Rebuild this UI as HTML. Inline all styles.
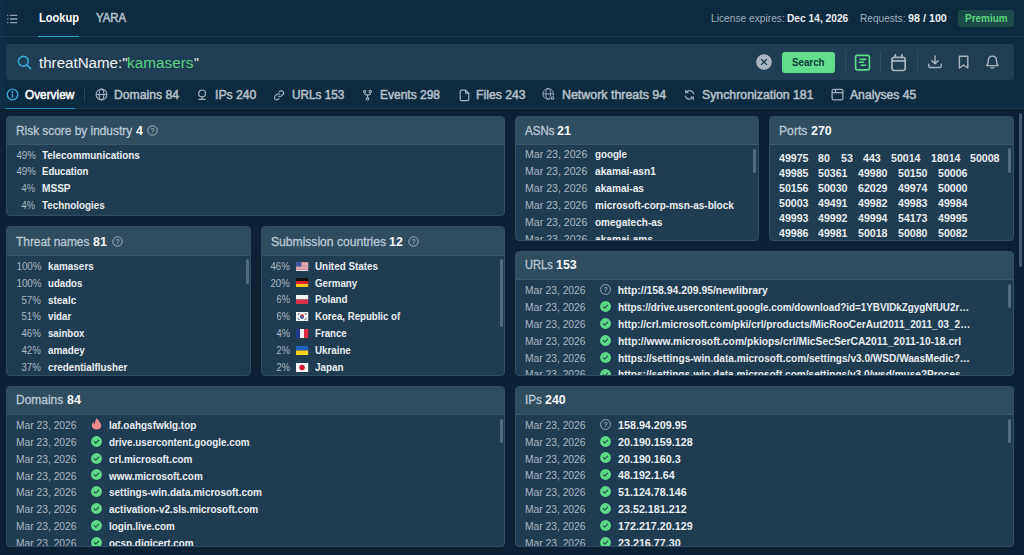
<!DOCTYPE html>
<html lang="en">
<head>
<meta charset="utf-8">
<title>Lookup</title>
<style>
*{box-sizing:border-box;margin:0;padding:0}
html,body{width:1024px;height:555px;overflow:hidden}
body{background:#0a2233;font-family:"Liberation Sans",sans-serif;color:#fff;position:relative;font-size:10.4px}
.abs{position:absolute}
.f{transform-origin:0 50%;display:inline-block;white-space:pre}
#top{left:0;top:0;width:1024px;height:109px;background:#0c2a40}
#topgrad{left:0;top:0;width:14px;height:109px;background:linear-gradient(90deg,#0e3048,rgba(12,42,64,0))}
#topline{left:0;top:36px;width:1024px;height:1px;background:#1a3b52}
#tabline{left:0;top:108px;width:1024px;height:1px;background:#16364c}
.t{position:absolute;white-space:nowrap;line-height:1}
#search{left:6px;top:44px;width:1008px;height:36px;background:#203e53;border-radius:4px}
.panel{position:absolute;background:#1f3d52;border:1px solid #2f4e63;border-radius:4px;overflow:hidden}
.ph{position:absolute;left:0;top:0;right:0;height:28.4px;background:#2e4d61;border-bottom:1px solid #3a596d}
.pt{position:absolute;left:9.4px;top:6px;font-size:12px;color:#b9c9d6;white-space:nowrap;line-height:14px}
.pt>.f{-webkit-text-stroke:0.3px #b9c9d6}
.pt b{color:#f6f8fa;font-weight:bold}
.rows{position:absolute;left:0;right:0;top:30.6px}
.r{position:relative;height:16.85px;line-height:16.85px;white-space:nowrap}
.r>span{position:absolute;top:0}
.pc{left:0;width:33.5px;text-align:right;color:#a9b8c4;transform-origin:100% 50%}
.pc .f{transform-origin:100% 50%}
.nm{font-weight:bold;color:#e9eef2}
.dt{left:9.4px;color:#a9b8c4}
.tb{top:88.5px;font-size:12px;font-weight:500;color:#b4c0ca;-webkit-text-stroke:0.5px}
.hp{position:absolute;top:1.1px;margin-left:4.8px}
.risk .pc{width:28.3px}
.risk .nm{left:35.3px}
.thr .pc{width:34.1px}
.thr .nm{left:41px}
.pc2{width:28px}
.fl{position:absolute;left:34.8px;top:2.8px}
.cn{left:53.8px}
.ic{position:absolute;top:0.8px}
#p_dom .ic{left:83.9px}
#p_url .ic,#p_ip .ic{left:83.5px}
#p_url .ic{top:1.3px}
.n0{left:78.9px}
.n1{left:101.5px}
.n3{left:101.5px}
.ports{position:absolute;left:8.6px;top:33.5px;line-height:15.15px;font-weight:bold;white-space:nowrap;color:#e9eef2}
.ports i{display:inline-block;width:10.3px}
.sb{position:absolute;width:3px;border-radius:2px;background:#4f6b80}
#p_asn .dt,#p_url .dt,#p_ip .dt{left:9.3px}
.ic.fi{top:-0.1px !important}
</style>
</head>
<body>
<div id="top" class="abs"></div>
<div id="topgrad" class="abs"></div>
<div id="topline" class="abs"></div>
<div id="tabline" class="abs"></div>
<div id="search" class="abs"></div>
<!-- top bar -->
<svg class="abs" style="left:6px;top:13px" width="13" height="12" viewBox="0 0 13 12" fill="none" stroke="#8fa0ae" stroke-width="1.3"><path d="M4 2.3H11.2M4 6H11.2M4 9.7H11.2"/><path d="M1.2 2.3H2.4M1.2 6H2.4M1.2 9.7H2.4"/></svg>
<div class="t" style="left:38.5px;top:12px;font-size:12px;font-weight:bold;color:#fff"><span class="f" style="transform:scaleX(0.921);margin-right:-3.4px;">Lookup</span></div>
<div class="abs" style="left:38px;top:35.5px;width:41px;height:1.6px;background:#35a7d6"></div>
<div class="t" style="left:95.5px;top:12px;font-size:12px;font-weight:500;-webkit-text-stroke:0.5px;color:#b3c1cd"><span class="f" style="transform:scaleX(0.948);margin-right:-1.7px;">YARA</span></div>
<div class="t" style="left:710.5px;top:13.6px;font-size:10.4px;color:#9fb0bd"><span class="f" style="transform:scaleX(0.983);margin-right:-1.3px;">License expires: </span><b style="color:#e9eff3"><span class="f" style="transform:scaleX(0.982);margin-right:-1.1px;">Dec 14, 2026</span></b></div>
<div class="t" style="left:859.5px;top:13.6px;font-size:10.4px;color:#9fb0bd"><span class="f" style="transform:scaleX(0.972);margin-right:-1.4px;">Requests: </span><b style="color:#e9eff3"><span class="f" style="transform:scaleX(1.034);margin-right:1.3px;">98 / 100</span></b></div>
<div class="abs" style="left:958px;top:10px;width:56px;height:17px;border-radius:3px;background:#1b4a48"></div>
<div class="t" style="left:965px;top:13.6px;font-size:10.4px;font-weight:bold;color:#5bd682"><span class="f" style="transform:scaleX(0.958);margin-right:-1.9px;">Premium</span></div>
<!-- search bar -->
<svg class="abs" style="left:16px;top:54px" width="17" height="17" viewBox="0 0 17 17" fill="none" stroke="#3aa8d8" stroke-width="1.6" stroke-linecap="round"><circle cx="7.3" cy="7.3" r="4.9"/><path d="M11 11L14.6 14.6"/></svg>
<div class="t" style="left:38.5px;top:55px;font-size:15.2px;color:#eef3f6"><span class="f" style="transform:scaleX(0.996);margin-right:-0.3px;">threatName:&quot;</span><span class="f" style="transform:scaleX(1.009);margin-right:0.6px;color:#5ad17f">kamasers</span><span class="f" style="transform:scaleX(0.902);margin-right:-0.5px;">&quot;</span></div>
<svg class="abs" style="left:756px;top:54px" width="16" height="16" viewBox="0 0 16 16"><circle cx="8" cy="8" r="7.8" fill="#a9b6c1"/><path d="M5.1 5.1L10.9 10.9M10.9 5.1L5.1 10.9" stroke="#1b3446" stroke-width="1.3" fill="none"/></svg>
<div class="abs" style="left:781.5px;top:52px;width:53.5px;height:20.5px;border-radius:3px;background:#63dc8b"></div>
<div class="t" style="left:792px;top:58.2px;font-size:10.4px;font-weight:bold;color:#0d3a3c"><span class="f" style="transform:scaleX(0.938);margin-right:-2.2px;">Search</span></div>
<div class="abs" style="left:845px;top:51px;width:1px;height:22px;background:#2f4c60"></div>
<div class="abs" style="left:880px;top:51px;width:1px;height:22px;background:#2f4c60"></div>
<div class="abs" style="left:917px;top:51px;width:1px;height:22px;background:#2f4c60"></div>
<svg class="abs" style="left:854px;top:53.5px" width="17" height="18" viewBox="0 0 17 18" fill="none" stroke="#5edb87" stroke-width="1.6" stroke-linecap="round"><rect x="1.6" y="1.4" width="13.8" height="14.5" rx="1.8"/><path d="M6.4 5.4H11.5M5.4 8.3H9.6M7.3 11.3H11.5" stroke-width="1.6"/></svg>
<svg class="abs" style="left:890px;top:52.5px" width="18" height="19" viewBox="0 0 18 19" fill="none" stroke="#a9b6c1" stroke-width="1.7" stroke-linecap="round"><rect x="2" y="4.4" width="13.2" height="13.1" rx="2.2"/><path d="M2 7.8H15.2M5.3 1.8V4.4M12 1.8V4.4"/></svg>
<svg class="abs" style="left:927px;top:54px" width="16" height="16" viewBox="0 0 16 16" fill="none" stroke="#a9b6c1" stroke-width="1.4" stroke-linecap="round" stroke-linejoin="round"><path d="M8 2V9.6M4.9 6.8L8 9.8L11.1 6.8M1.8 10.2V12.2Q1.8 13.5 3.1 13.5H12.9Q14.2 13.5 14.2 12.2V10.2"/></svg>
<svg class="abs" style="left:956px;top:54px" width="16" height="16" viewBox="0 0 16 16" fill="none" stroke="#a9b6c1" stroke-width="1.4" stroke-linejoin="round"><path d="M3.4 2.2H11.8V14L7.6 11L3.4 14Z"/></svg>
<svg class="abs" style="left:984px;top:54px" width="17" height="16" viewBox="0 0 17 16" fill="none" stroke="#a9b6c1" stroke-width="1.4" stroke-linecap="round" stroke-linejoin="round"><path d="M2.6 11.6C4.2 10.4 4.3 8.8 4.3 6.6C4.3 3.9 6 2.1 8.4 2.1C10.8 2.1 12.5 3.9 12.5 6.6C12.5 8.8 12.6 10.4 14.2 11.6Z"/><path d="M7 13.9H9.8"/></svg>
<!-- tabs -->
<svg class="abs" style="left:5.5px;top:87.6px" width="13" height="13" viewBox="0 0 13 13" fill="none" stroke="#3aa8d8" stroke-width="1.3" stroke-linecap="round"><circle cx="6.5" cy="6.5" r="5.3"/><path d="M6.5 6.2V9.2"/><circle cx="6.5" cy="4" r="0.4" fill="#3aa8d8"/></svg>
<div class="t tb" style="left:25px;color:#fff"><span class="f" style="transform:scaleX(0.985);margin-right:-0.8px;">Overview</span></div>
<div class="abs" style="left:6px;top:107.8px;width:69.2px;height:1.4px;background:#2a8fc0"></div>
<div class="abs" style="left:84.2px;top:87px;width:1px;height:14px;background:#2a475c"></div>
<svg class="abs" style="left:95px;top:87.6px" width="13" height="13" viewBox="0 0 13 13" fill="none" stroke="#a3b2be" stroke-width="1.1"><circle cx="6.5" cy="6.5" r="5.4"/><ellipse cx="6.5" cy="6.5" rx="2.4" ry="5.4"/><path d="M1.1 6.5H11.9"/></svg>
<div class="t tb" style="left:114.3px"><span class="f" style="transform:scaleX(1.016);margin-right:1.0px;">Domains 84</span></div>
<svg class="abs" style="left:195px;top:87.6px" width="13" height="14" viewBox="0 0 13 14" fill="none" stroke="#a3b2be" stroke-width="1.2" stroke-linecap="round"><circle cx="7.1" cy="5.4" r="3.4"/><path d="M7.1 8.8V11.3M4 11.4H10.2"/></svg>
<div class="t tb" style="left:215px"><span class="f" style="transform:scaleX(1.015);margin-right:0.6px;">IPs 240</span></div>
<svg class="abs" style="left:272px;top:87.6px" width="13" height="13" viewBox="0 0 13 13" fill="none" stroke="#a3b2be" stroke-width="1.3" stroke-linecap="round"><g transform="translate(7 7.2) scale(.86) translate(-6.5 -6.5)"><path d="M5.6 7.4A2.6 2.6 0 0 0 9.3 7.4L11 5.7A2.6 2.6 0 0 0 7.3 2L6.6 2.7"/><path d="M7.4 5.6A2.6 2.6 0 0 0 3.7 5.6L2 7.3A2.6 2.6 0 0 0 5.7 11L6.4 10.3"/></g></svg>
<div class="t tb" style="left:292px"><span class="f" style="transform:scaleX(0.980);margin-right:-1.1px;">URLs 153</span></div>
<svg class="abs" style="left:360.8px;top:88.6px" width="13" height="13" viewBox="0 0 13 13" fill="none" stroke="#a3b2be" stroke-width="1.15"><circle cx="3.7" cy="2.4" r="1.15"/><circle cx="9.3" cy="2.4" r="1.15"/><circle cx="6.5" cy="9.8" r="1.15"/><path d="M3.7 3.6V4.3Q3.7 5.9 5.3 5.9H7.7Q9.3 5.9 9.3 4.3V3.6M6.5 5.9V8.6"/></svg>
<div class="t tb" style="left:380px"><span class="f" style="">Events 298</span></div>
<svg class="abs" style="left:457.5px;top:87.5px" width="13" height="14" viewBox="0 0 13 14" fill="none" stroke="#a3b2be" stroke-width="1.2" stroke-linejoin="round"><path d="M2.2 3.4Q2.2 2.2 3.4 2.2H7.6L10.8 5.2V11.4Q10.8 12.6 9.6 12.6H3.4Q2.2 12.6 2.2 11.4Z"/><path d="M7.6 2.2V5.2H10.8"/></svg>
<div class="t tb" style="left:476px"><span class="f" style="transform:scaleX(1.017);margin-right:0.8px;">Files 243</span></div>
<svg class="abs" style="left:542.2px;top:87.2px" width="14" height="14" viewBox="0 0 14 14" fill="none" stroke="#a3b3c0" stroke-width="0.9"><circle cx="6.2" cy="6.9" r="5.3"/><ellipse cx="6.2" cy="6.9" rx="2.3" ry="5.3"/><path d="M.9 6.9H11.5"/><circle cx="10.6" cy="11" r="2.5" fill="#0c2a40" stroke="none"/><circle cx="10.6" cy="11" r="1.3" stroke-width="1.1"/></svg>
<div class="t tb" style="left:561.5px"><span class="f" style="transform:scaleX(1.034);margin-right:3.4px;">Network threats 94</span></div>
<svg class="abs" style="left:682.5px;top:87.6px" width="13" height="13" viewBox="0 0 13 13" fill="none" stroke="#a3b2be" stroke-width="1.3" stroke-linecap="round" stroke-linejoin="round"><g transform="translate(6.5 6.9) scale(.88) translate(-6.5 -6.5)"><path d="M11.3 5.2A5 5 0 0 0 2.4 3.8M1.7 7.8A5 5 0 0 0 10.6 9.2"/><path d="M2.2 1.4V4H4.8M10.8 11.6V9H8.2"/></g></svg>
<div class="t tb" style="left:702px"><span class="f" style="transform:scaleX(1.026);margin-right:2.8px;">Synchronization 181</span></div>
<svg class="abs" style="left:830.5px;top:87.6px" width="13" height="13" viewBox="0 0 13 13" fill="none" stroke="#a3b2be" stroke-width="1.2"><rect x="1.1" y="1.3" width="10.8" height="10.6" rx="1.4"/><path d="M1.1 4.7H11.9M4.6 1.3V4.7"/></svg>
<div class="t tb" style="left:850px"><span class="f" style="transform:scaleX(1.015);margin-right:0.9px;">Analyses 45</span></div>
<!-- panels -->
<div class="panel" id="p_risk" style="left:6px;top:116px;width:499px;height:100.2px"><div class="ph"></div><div class="pt" style="left:9.4px;top:7px"><span class="f" style="transform:scaleX(0.989);margin-right:-1.3px;">Risk score by industry </span><b><span class="f" style="transform:scaleX(1.030);margin-right:0.2px;">4</span></b><svg class="hp" width="11" height="11" viewBox="0 0 11 11" fill="none" stroke="#a9bccb" stroke-width="0.9"><circle cx="5.5" cy="5.5" r="4.7"/><text x="5.5" y="8" text-anchor="middle" font-size="7" font-family="Liberation Sans, sans-serif" fill="#c3ced7" stroke="none">?</text></svg></div>
<div class="rows risk" style="top:30.6px">
<div class="r"><span class="pc"><span class="f" style="transform:scaleX(0.928);margin-left:-1.5px;">49%</span></span><span class="nm"><span class="f" style="transform:scaleX(0.954);margin-right:-4.7px;">Telecommunications</span></span></div>
<div class="r"><span class="pc"><span class="f" style="transform:scaleX(0.928);margin-left:-1.5px;">49%</span></span><span class="nm"><span class="f" style="transform:scaleX(0.923);margin-right:-3.9px;">Education</span></span></div>
<div class="r"><span class="pc"><span class="f" style="transform:scaleX(0.895);margin-left:-1.6px;">4%</span></span><span class="nm"><span class="f" style="transform:scaleX(0.971);margin-right:-0.9px;">MSSP</span></span></div>
<div class="r"><span class="pc"><span class="f" style="transform:scaleX(0.895);margin-left:-1.6px;">4%</span></span><span class="nm"><span class="f" style="transform:scaleX(0.948);margin-right:-3.4px;">Technologies</span></span></div>
</div></div>
<div class="panel" id="p_thr" style="left:6px;top:226.4px;width:244.8px;height:149.4px"><div class="ph"></div><div class="pt" style="left:9.4px;top:7.5px"><span class="f" style="transform:scaleX(0.992);margin-right:-0.6px;">Threat names </span><b><span class="f" style="transform:scaleX(1.032);margin-right:0.4px;">81</span></b><svg class="hp" width="11" height="11" viewBox="0 0 11 11" fill="none" stroke="#a9bccb" stroke-width="0.9"><circle cx="5.5" cy="5.5" r="4.7"/><text x="5.5" y="8" text-anchor="middle" font-size="7" font-family="Liberation Sans, sans-serif" fill="#c3ced7" stroke="none">?</text></svg></div>
<div class="rows thr" style="top:31.5px">
<div class="r"><span class="pc"><span class="f" style="transform:scaleX(0.946);margin-left:-1.4px;">100%</span></span><span class="nm"><span class="f" style="transform:scaleX(0.954);margin-right:-2.2px;">kamasers</span></span></div>
<div class="r"><span class="pc"><span class="f" style="transform:scaleX(0.946);margin-left:-1.4px;">100%</span></span><span class="nm"><span class="f" style="transform:scaleX(0.928);margin-right:-2.7px;">udados</span></span></div>
<div class="r"><span class="pc"><span class="f" style="transform:scaleX(0.928);margin-left:-1.5px;">57%</span></span><span class="nm"><span class="f" style="transform:scaleX(0.957);margin-right:-1.3px;">stealc</span></span></div>
<div class="r"><span class="pc"><span class="f" style="transform:scaleX(0.928);margin-left:-1.5px;">51%</span></span><span class="nm"><span class="f" style="transform:scaleX(0.935);margin-right:-1.6px;">vidar</span></span></div>
<div class="r"><span class="pc"><span class="f" style="transform:scaleX(0.928);margin-left:-1.5px;">46%</span></span><span class="nm"><span class="f" style="transform:scaleX(0.926);margin-right:-2.9px;">sainbox</span></span></div>
<div class="r"><span class="pc"><span class="f" style="transform:scaleX(0.928);margin-left:-1.5px;">42%</span></span><span class="nm"><span class="f" style="transform:scaleX(0.950);margin-right:-2.0px;">amadey</span></span></div>
<div class="r"><span class="pc"><span class="f" style="transform:scaleX(0.928);margin-left:-1.5px;">37%</span></span><span class="nm"><span class="f" style="transform:scaleX(0.948);margin-right:-4.4px;">credentialflusher</span></span></div>
<div class="r"><span class="pc"><span class="f" style="transform:scaleX(0.928);margin-left:-1.5px;">33%</span></span><span class="nm"><span class="f" style="transform:scaleX(0.961);margin-right:-1.3px;">stealer</span></span></div>
</div><div class="sb" style="right:1.2px;top:32px;height:24.5px"></div></div>
<div class="panel" id="p_sub" style="left:260.6px;top:226.4px;width:244.4px;height:149.4px"><div class="ph"></div><div class="pt" style="left:9.4px;top:7.5px"><span class="f" style="transform:scaleX(1.009);margin-right:1.1px;">Submission countries </span><b><span class="f" style="transform:scaleX(1.032);margin-right:0.4px;">12</span></b><svg class="hp" width="11" height="11" viewBox="0 0 11 11" fill="none" stroke="#a9bccb" stroke-width="0.9"><circle cx="5.5" cy="5.5" r="4.7"/><text x="5.5" y="8" text-anchor="middle" font-size="7" font-family="Liberation Sans, sans-serif" fill="#c3ced7" stroke="none">?</text></svg></div>
<div class="rows" style="top:31.4px">
<div class="r"><span class="pc pc2"><span class="f" style="transform:scaleX(0.928);margin-left:-1.5px;">46%</span></span><svg class="fl" width="12.2" height="9" viewBox="0 0 12 9" preserveAspectRatio="none"><rect width="12" height="9" fill="#e8e8ee"/><path d="M0 .6H12M0 2H12M0 3.4H12M0 4.8H12M0 6.2H12M0 7.6H12" stroke="#d4606f" stroke-width=".75"/><rect width="5.4" height="4.6" fill="#4a5a9c"/></svg><span class="nm cn"><span class="f" style="transform:scaleX(0.948);margin-right:-3.5px;">United States</span></span></div>
<div class="r"><span class="pc pc2"><span class="f" style="transform:scaleX(0.928);margin-left:-1.5px;">20%</span></span><svg class="fl" width="12.2" height="9" viewBox="0 0 12 9" preserveAspectRatio="none"><rect width="12" height="3" fill="#111"/><rect y="3" width="12" height="3" fill="#e01f26"/><rect y="6" width="12" height="3" fill="#f6c915"/></svg><span class="nm cn"><span class="f" style="transform:scaleX(0.935);margin-right:-2.9px;">Germany</span></span></div>
<div class="r"><span class="pc pc2"><span class="f" style="transform:scaleX(0.895);margin-left:-1.6px;">6%</span></span><svg class="fl" width="12.2" height="9" viewBox="0 0 12 9" preserveAspectRatio="none"><rect width="12" height="4.5" fill="#f4f4f4"/><rect y="4.5" width="12" height="4.5" fill="#d8304a"/></svg><span class="nm cn"><span class="f" style="transform:scaleX(0.938);margin-right:-2.2px;">Poland</span></span></div>
<div class="r"><span class="pc pc2"><span class="f" style="transform:scaleX(0.895);margin-left:-1.6px;">6%</span></span><svg class="fl" width="12.2" height="9" viewBox="0 0 12 9" preserveAspectRatio="none"><rect width="12" height="9" fill="#f7f7f7"/><path d="M3.9 4.5A2.1 2.1 0 0 1 8.1 4.5Z" fill="#cf3046" transform="rotate(25 6 4.5)"/><path d="M3.9 4.5A2.1 2.1 0 0 0 8.1 4.5Z" fill="#2c4a97" transform="rotate(25 6 4.5)"/><path d="M1.6 2.6L2.9 .9M2.3 3L3.6 1.3M8.4 7.7L9.7 6M9.1 8.1L10.4 6.4M8.4 1.3L9.7 3M9.1 .9L10.4 2.6M1.6 6.4L2.9 8.1M2.3 6L3.6 7.7" stroke="#222" stroke-width=".5"/></svg><span class="nm cn"><span class="f" style="transform:scaleX(0.928);margin-right:-6.6px;">Korea, Republic of</span></span></div>
<div class="r"><span class="pc pc2"><span class="f" style="transform:scaleX(0.895);margin-left:-1.6px;">4%</span></span><svg class="fl" width="12.2" height="9" viewBox="0 0 12 9" preserveAspectRatio="none"><rect width="4" height="9" fill="#1f3a93"/><rect x="4" width="4" height="9" fill="#f4f4f4"/><rect x="8" width="4" height="9" fill="#e6283c"/></svg><span class="nm cn"><span class="f" style="transform:scaleX(0.928);margin-right:-2.5px;">France</span></span></div>
<div class="r"><span class="pc pc2"><span class="f" style="transform:scaleX(0.895);margin-left:-1.6px;">2%</span></span><svg class="fl" width="12.2" height="9" viewBox="0 0 12 9" preserveAspectRatio="none"><rect width="12" height="4.5" fill="#1f63c4"/><rect y="4.5" width="12" height="4.5" fill="#f6d21c"/></svg><span class="nm cn"><span class="f" style="transform:scaleX(0.939);margin-right:-2.3px;">Ukraine</span></span></div>
<div class="r"><span class="pc pc2"><span class="f" style="transform:scaleX(0.895);margin-left:-1.6px;">2%</span></span><svg class="fl" width="12.2" height="9" viewBox="0 0 12 9" preserveAspectRatio="none"><rect width="12" height="9" fill="#f7f7f7"/><circle cx="6" cy="4.5" r="2.7" fill="#d7102f"/></svg><span class="nm cn"><span class="f" style="transform:scaleX(0.953);margin-right:-1.4px;">Japan</span></span></div>
</div><div class="sb" style="right:1.2px;top:32px;height:67.5px"></div></div>
<div class="panel" id="p_dom" style="left:6px;top:385.7px;width:499px;height:161.2px"><div class="ph"></div><div class="pt" style="left:9.4px;top:6.8px"><span class="f" style="transform:scaleX(0.996);margin-right:-0.2px;">Domains </span><b><span class="f" style="transform:scaleX(1.032);margin-right:0.4px;">84</span></b></div>
<div class="rows" style="top:31.4px">
<div class="r"><span class="dt"><span class="f" style="transform:scaleX(0.988);margin-right:-0.8px;">Mar 23, 2026</span></span><svg class="ic fi" width="11" height="12" viewBox="0 0 11 12"><path d="M6.1 0.1C6.6 1.8 8.2 3.2 9.3 4.9C10 6 10.3 7 10.2 8C10 10 8.2 11.5 5.6 11.5C3 11.5 1 10 0.9 7.8C0.8 6.3 1.4 5 2.3 4.1C2.6 5 3.1 5.7 3.9 6C3.7 3.8 4.6 1.6 6.1 0.1Z" fill="#f08a8c"/></svg><span class="nm n1"><span class="f" style="transform:scaleX(0.957);margin-right:-4.0px;">laf.oahgsfwklg.top</span></span></div>
<div class="r"><span class="dt"><span class="f" style="transform:scaleX(0.988);margin-right:-0.8px;">Mar 23, 2026</span></span><svg class="ic" width="11" height="11" viewBox="0 0 11 11"><circle cx="5.5" cy="5.5" r="5.45" fill="#5fd988"/><path d="M3.3 5.7L4.8 7.1L7.7 4.1" fill="none" stroke="#1f4a48" stroke-width="1.1" stroke-linecap="round" stroke-linejoin="round"/></svg><span class="nm n1"><span class="f" style="transform:scaleX(0.947);margin-right:-7.8px;">drive.usercontent.google.com</span></span></div>
<div class="r"><span class="dt"><span class="f" style="transform:scaleX(0.988);margin-right:-0.8px;">Mar 23, 2026</span></span><svg class="ic" width="11" height="11" viewBox="0 0 11 11"><circle cx="5.5" cy="5.5" r="5.45" fill="#5fd988"/><path d="M3.3 5.7L4.8 7.1L7.7 4.1" fill="none" stroke="#1f4a48" stroke-width="1.1" stroke-linecap="round" stroke-linejoin="round"/></svg><span class="nm n1"><span class="f" style="transform:scaleX(0.956);margin-right:-3.8px;">crl.microsoft.com</span></span></div>
<div class="r"><span class="dt"><span class="f" style="transform:scaleX(0.988);margin-right:-0.8px;">Mar 23, 2026</span></span><svg class="ic" width="11" height="11" viewBox="0 0 11 11"><circle cx="5.5" cy="5.5" r="5.45" fill="#5fd988"/><path d="M3.3 5.7L4.8 7.1L7.7 4.1" fill="none" stroke="#1f4a48" stroke-width="1.1" stroke-linecap="round" stroke-linejoin="round"/></svg><span class="nm n1"><span class="f" style="transform:scaleX(0.953);margin-right:-4.7px;">www.microsoft.com</span></span></div>
<div class="r"><span class="dt"><span class="f" style="transform:scaleX(0.988);margin-right:-0.8px;">Mar 23, 2026</span></span><svg class="ic" width="11" height="11" viewBox="0 0 11 11"><circle cx="5.5" cy="5.5" r="5.45" fill="#5fd988"/><path d="M3.3 5.7L4.8 7.1L7.7 4.1" fill="none" stroke="#1f4a48" stroke-width="1.1" stroke-linecap="round" stroke-linejoin="round"/></svg><span class="nm n1"><span class="f" style="transform:scaleX(0.960);margin-right:-6.3px;">settings-win.data.microsoft.com</span></span></div>
<div class="r"><span class="dt"><span class="f" style="transform:scaleX(0.988);margin-right:-0.8px;">Mar 23, 2026</span></span><svg class="ic" width="11" height="11" viewBox="0 0 11 11"><circle cx="5.5" cy="5.5" r="5.45" fill="#5fd988"/><path d="M3.3 5.7L4.8 7.1L7.7 4.1" fill="none" stroke="#1f4a48" stroke-width="1.1" stroke-linecap="round" stroke-linejoin="round"/></svg><span class="nm n1"><span class="f" style="transform:scaleX(0.960);margin-right:-6.2px;">activation-v2.sls.microsoft.com</span></span></div>
<div class="r"><span class="dt"><span class="f" style="transform:scaleX(0.988);margin-right:-0.8px;">Mar 23, 2026</span></span><svg class="ic" width="11" height="11" viewBox="0 0 11 11"><circle cx="5.5" cy="5.5" r="5.45" fill="#5fd988"/><path d="M3.3 5.7L4.8 7.1L7.7 4.1" fill="none" stroke="#1f4a48" stroke-width="1.1" stroke-linecap="round" stroke-linejoin="round"/></svg><span class="nm n1"><span class="f" style="transform:scaleX(0.949);margin-right:-3.5px;">login.live.com</span></span></div>
<div class="r"><span class="dt"><span class="f" style="transform:scaleX(0.988);margin-right:-0.8px;">Mar 23, 2026</span></span><svg class="ic" width="11" height="11" viewBox="0 0 11 11"><circle cx="5.5" cy="5.5" r="5.45" fill="#5fd988"/><path d="M3.3 5.7L4.8 7.1L7.7 4.1" fill="none" stroke="#1f4a48" stroke-width="1.1" stroke-linecap="round" stroke-linejoin="round"/></svg><span class="nm n1"><span class="f" style="transform:scaleX(0.952);margin-right:-4.3px;">ocsp.digicert.com</span></span></div>
<div class="r"><span class="dt"><span class="f" style="transform:scaleX(0.988);margin-right:-0.8px;">Mar 23, 2026</span></span><svg class="ic" width="11" height="11" viewBox="0 0 11 11"><circle cx="5.5" cy="5.5" r="5.45" fill="#5fd988"/><path d="M3.3 5.7L4.8 7.1L7.7 4.1" fill="none" stroke="#1f4a48" stroke-width="1.1" stroke-linecap="round" stroke-linejoin="round"/></svg><span class="nm n1"><span class="f" style="transform:scaleX(0.947);margin-right:-2.8px;">c.pki.goog</span></span></div>
</div><div class="sb" style="right:1.2px;top:32px;height:24.5px"></div></div>
<div class="panel" id="p_asn" style="left:515.2px;top:116px;width:243.7px;height:124.5px"><div class="ph"></div><div class="pt" style="left:8.4px;top:6.8px"><span class="f" style="transform:scaleX(0.961);margin-right:-1.3px;">ASNs </span><b><span class="f" style="transform:scaleX(1.032);margin-right:0.4px;">21</span></b></div>
<div class="rows" style="top:30.3px">
<div class="r"><span class="dt"><span class="f" style="transform:scaleX(1.017);margin-right:1.1px;">Mar 23, 2026</span></span><span class="nm n0"><span class="f" style="transform:scaleX(0.939);margin-right:-2.1px;">google</span></span></div>
<div class="r"><span class="dt"><span class="f" style="transform:scaleX(1.017);margin-right:1.1px;">Mar 23, 2026</span></span><span class="nm n0"><span class="f" style="transform:scaleX(0.974);margin-right:-1.6px;">akamai-asn1</span></span></div>
<div class="r"><span class="dt"><span class="f" style="transform:scaleX(1.017);margin-right:1.1px;">Mar 23, 2026</span></span><span class="nm n0"><span class="f" style="transform:scaleX(0.975);margin-right:-1.3px;">akamai-as</span></span></div>
<div class="r"><span class="dt"><span class="f" style="transform:scaleX(1.017);margin-right:1.1px;">Mar 23, 2026</span></span><span class="nm n0"><span class="f" style="transform:scaleX(0.966);margin-right:-4.9px;">microsoft-corp-msn-as-block</span></span></div>
<div class="r"><span class="dt"><span class="f" style="transform:scaleX(1.017);margin-right:1.1px;">Mar 23, 2026</span></span><span class="nm n0"><span class="f" style="transform:scaleX(0.964);margin-right:-2.5px;">omegatech-as</span></span></div>
<div class="r"><span class="dt"><span class="f" style="transform:scaleX(1.017);margin-right:1.1px;">Mar 23, 2026</span></span><span class="nm n0"><span class="f" style="transform:scaleX(0.975);margin-right:-1.5px;">akamai-ams</span></span></div>
</div><div class="sb" style="right:1.7px;top:31.5px;height:24.5px"></div></div>
<div class="panel" id="p_prt" style="left:769px;top:116px;width:244.6px;height:124.5px"><div class="ph"></div><div class="pt" style="left:9.4px;top:6.8px"><span class="f" style="transform:scaleX(1.014);margin-right:0.5px;">Ports </span><b><span class="f" style="transform:scaleX(1.031);margin-right:0.6px;">270</span></b></div>
<div class="ports"><span class="f" style="transform:scaleX(1.021);margin-right:0.6px;">49975</span><i></i><span class="f" style="transform:scaleX(1.022);margin-right:0.3px;">80</span><i></i><span class="f" style="transform:scaleX(1.022);margin-right:0.3px;">53</span><i></i><span class="f" style="transform:scaleX(1.021);margin-right:0.4px;">443</span><i></i><span class="f" style="transform:scaleX(1.021);margin-right:0.6px;">50014</span><i></i><span class="f" style="transform:scaleX(1.021);margin-right:0.6px;">18014</span><i></i><span class="f" style="transform:scaleX(1.021);margin-right:0.6px;">50008</span><i></i><br>
<span class="f" style="transform:scaleX(1.021);margin-right:0.6px;">49985</span><i></i><span class="f" style="transform:scaleX(1.021);margin-right:0.6px;">50361</span><i></i><span class="f" style="transform:scaleX(1.021);margin-right:0.6px;">49980</span><i></i><span class="f" style="transform:scaleX(1.021);margin-right:0.6px;">50150</span><i></i><span class="f" style="transform:scaleX(1.021);margin-right:0.6px;">50006</span><i></i><br>
<span class="f" style="transform:scaleX(1.021);margin-right:0.6px;">50156</span><i></i><span class="f" style="transform:scaleX(1.021);margin-right:0.6px;">50030</span><i></i><span class="f" style="transform:scaleX(1.021);margin-right:0.6px;">62029</span><i></i><span class="f" style="transform:scaleX(1.021);margin-right:0.6px;">49974</span><i></i><span class="f" style="transform:scaleX(1.021);margin-right:0.6px;">50000</span><i></i><br>
<span class="f" style="transform:scaleX(1.021);margin-right:0.6px;">50003</span><i></i><span class="f" style="transform:scaleX(1.021);margin-right:0.6px;">49491</span><i></i><span class="f" style="transform:scaleX(1.021);margin-right:0.6px;">49982</span><i></i><span class="f" style="transform:scaleX(1.021);margin-right:0.6px;">49983</span><i></i><span class="f" style="transform:scaleX(1.021);margin-right:0.6px;">49984</span><i></i><br>
<span class="f" style="transform:scaleX(1.021);margin-right:0.6px;">49993</span><i></i><span class="f" style="transform:scaleX(1.021);margin-right:0.6px;">49992</span><i></i><span class="f" style="transform:scaleX(1.021);margin-right:0.6px;">49994</span><i></i><span class="f" style="transform:scaleX(1.021);margin-right:0.6px;">54173</span><i></i><span class="f" style="transform:scaleX(1.021);margin-right:0.6px;">49995</span><i></i><br>
<span class="f" style="transform:scaleX(1.021);margin-right:0.6px;">49986</span><i></i><span class="f" style="transform:scaleX(1.021);margin-right:0.6px;">49981</span><i></i><span class="f" style="transform:scaleX(1.021);margin-right:0.6px;">50018</span><i></i><span class="f" style="transform:scaleX(1.021);margin-right:0.6px;">50080</span><i></i><span class="f" style="transform:scaleX(1.021);margin-right:0.6px;">50082</span><i></i></div><div class="sb" style="right:1.5px;top:31.2px;height:25px"></div></div>
<div class="panel" id="p_url" style="left:515.2px;top:250.6px;width:498.4px;height:125.2px"><div class="ph"></div><div class="pt" style="left:9.2px;top:6.6px"><span class="f" style="transform:scaleX(0.924);margin-right:-2.5px;">URLs </span><b><span class="f" style="transform:scaleX(1.031);margin-right:0.6px;">153</span></b></div>
<div class="rows" style="top:31.6px">
<div class="r"><span class="dt"><span class="f" style="transform:scaleX(0.988);margin-right:-0.8px;">Mar 23, 2026</span></span><svg class="ic" width="11" height="11" viewBox="0 0 11 11" fill="none" stroke="#9fb0bd" stroke-width="0.9"><circle cx="5.5" cy="5.5" r="4.95"/><text x="5.5" y="8.1" text-anchor="middle" font-size="7.4" font-family="Liberation Sans, sans-serif" fill="#c3ced7" stroke="none">?</text></svg><span class="nm n3"><span class="f" style="">http://158.94.209.95/newlibrary</span></span></div>
<div class="r"><span class="dt"><span class="f" style="transform:scaleX(0.988);margin-right:-0.8px;">Mar 23, 2026</span></span><svg class="ic" width="11" height="11" viewBox="0 0 11 11"><circle cx="5.5" cy="5.5" r="5.45" fill="#5fd988"/><path d="M3.3 5.7L4.8 7.1L7.7 4.1" fill="none" stroke="#1f4a48" stroke-width="1.1" stroke-linecap="round" stroke-linejoin="round"/></svg><span class="nm n3"><span class="f" style="transform:scaleX(0.948);margin-right:-19.1px;">https://drive.usercontent.google.com/download?id=1YBVIDkZgygNfUU2r…</span></span></div>
<div class="r"><span class="dt"><span class="f" style="transform:scaleX(0.988);margin-right:-0.8px;">Mar 23, 2026</span></span><svg class="ic" width="11" height="11" viewBox="0 0 11 11"><circle cx="5.5" cy="5.5" r="5.45" fill="#5fd988"/><path d="M3.3 5.7L4.8 7.1L7.7 4.1" fill="none" stroke="#1f4a48" stroke-width="1.1" stroke-linecap="round" stroke-linejoin="round"/></svg><span class="nm n3"><span class="f" style="transform:scaleX(0.973);margin-right:-9.7px;">http://crl.microsoft.com/pki/crl/products/MicRooCerAut2011_2011_03_2…</span></span></div>
<div class="r"><span class="dt"><span class="f" style="transform:scaleX(0.988);margin-right:-0.8px;">Mar 23, 2026</span></span><svg class="ic" width="11" height="11" viewBox="0 0 11 11"><circle cx="5.5" cy="5.5" r="5.45" fill="#5fd988"/><path d="M3.3 5.7L4.8 7.1L7.7 4.1" fill="none" stroke="#1f4a48" stroke-width="1.1" stroke-linecap="round" stroke-linejoin="round"/></svg><span class="nm n3"><span class="f" style="transform:scaleX(0.991);margin-right:-3.2px;">http://www.microsoft.com/pkiops/crl/MicSecSerCA2011_2011-10-18.crl</span></span></div>
<div class="r"><span class="dt"><span class="f" style="transform:scaleX(0.988);margin-right:-0.8px;">Mar 23, 2026</span></span><svg class="ic" width="11" height="11" viewBox="0 0 11 11"><circle cx="5.5" cy="5.5" r="5.45" fill="#5fd988"/><path d="M3.3 5.7L4.8 7.1L7.7 4.1" fill="none" stroke="#1f4a48" stroke-width="1.1" stroke-linecap="round" stroke-linejoin="round"/></svg><span class="nm n3"><span class="f" style="transform:scaleX(0.970);margin-right:-10.8px;">https://settings-win.data.microsoft.com/settings/v3.0/WSD/WaasMedic?…</span></span></div>
<div class="r"><span class="dt"><span class="f" style="transform:scaleX(0.988);margin-right:-0.8px;">Mar 23, 2026</span></span><svg class="ic" width="11" height="11" viewBox="0 0 11 11"><circle cx="5.5" cy="5.5" r="5.45" fill="#5fd988"/><path d="M3.3 5.7L4.8 7.1L7.7 4.1" fill="none" stroke="#1f4a48" stroke-width="1.1" stroke-linecap="round" stroke-linejoin="round"/></svg><span class="nm n3"><span class="f" style="transform:scaleX(0.968);margin-right:-11.5px;">https://settings-win.data.microsoft.com/settings/v3.0/wsd/muse?Proces…</span></span></div>
</div><div class="sb" style="right:1.5px;top:32px;height:24.5px"></div></div>
<div class="panel" id="p_ip" style="left:515.2px;top:385.7px;width:498.4px;height:161.2px"><div class="ph"></div><div class="pt" style="left:8.4px;top:6.8px"><span class="f" style="transform:scaleX(0.968);margin-right:-0.7px;">IPs </span><b><span class="f" style="transform:scaleX(1.031);margin-right:0.6px;">240</span></b></div>
<div class="rows" style="top:31.2px">
<div class="r"><span class="dt"><span class="f" style="transform:scaleX(0.988);margin-right:-0.8px;">Mar 23, 2026</span></span><svg class="ic" width="11" height="11" viewBox="0 0 11 11" fill="none" stroke="#9fb0bd" stroke-width="0.9"><circle cx="5.5" cy="5.5" r="4.95"/><text x="5.5" y="8.1" text-anchor="middle" font-size="7.4" font-family="Liberation Sans, sans-serif" fill="#c3ced7" stroke="none">?</text></svg><span class="nm n3"><span class="f" style="transform:scaleX(1.033);margin-right:2.2px;">158.94.209.95</span></span></div>
<div class="r"><span class="dt"><span class="f" style="transform:scaleX(0.988);margin-right:-0.8px;">Mar 23, 2026</span></span><svg class="ic" width="11" height="11" viewBox="0 0 11 11"><circle cx="5.5" cy="5.5" r="5.45" fill="#5fd988"/><path d="M3.3 5.7L4.8 7.1L7.7 4.1" fill="none" stroke="#1f4a48" stroke-width="1.1" stroke-linecap="round" stroke-linejoin="round"/></svg><span class="nm n3"><span class="f" style="transform:scaleX(1.033);margin-right:2.4px;">20.190.159.128</span></span></div>
<div class="r"><span class="dt"><span class="f" style="transform:scaleX(0.988);margin-right:-0.8px;">Mar 23, 2026</span></span><svg class="ic" width="11" height="11" viewBox="0 0 11 11"><circle cx="5.5" cy="5.5" r="5.45" fill="#5fd988"/><path d="M3.3 5.7L4.8 7.1L7.7 4.1" fill="none" stroke="#1f4a48" stroke-width="1.1" stroke-linecap="round" stroke-linejoin="round"/></svg><span class="nm n3"><span class="f" style="transform:scaleX(1.033);margin-right:2.0px;">20.190.160.3</span></span></div>
<div class="r"><span class="dt"><span class="f" style="transform:scaleX(0.988);margin-right:-0.8px;">Mar 23, 2026</span></span><svg class="ic" width="11" height="11" viewBox="0 0 11 11"><circle cx="5.5" cy="5.5" r="5.45" fill="#5fd988"/><path d="M3.3 5.7L4.8 7.1L7.7 4.1" fill="none" stroke="#1f4a48" stroke-width="1.1" stroke-linecap="round" stroke-linejoin="round"/></svg><span class="nm n3"><span class="f" style="transform:scaleX(1.033);margin-right:1.8px;">48.192.1.64</span></span></div>
<div class="r"><span class="dt"><span class="f" style="transform:scaleX(0.988);margin-right:-0.8px;">Mar 23, 2026</span></span><svg class="ic" width="11" height="11" viewBox="0 0 11 11"><circle cx="5.5" cy="5.5" r="5.45" fill="#5fd988"/><path d="M3.3 5.7L4.8 7.1L7.7 4.1" fill="none" stroke="#1f4a48" stroke-width="1.1" stroke-linecap="round" stroke-linejoin="round"/></svg><span class="nm n3"><span class="f" style="transform:scaleX(1.033);margin-right:2.2px;">51.124.78.146</span></span></div>
<div class="r"><span class="dt"><span class="f" style="transform:scaleX(0.988);margin-right:-0.8px;">Mar 23, 2026</span></span><svg class="ic" width="11" height="11" viewBox="0 0 11 11"><circle cx="5.5" cy="5.5" r="5.45" fill="#5fd988"/><path d="M3.3 5.7L4.8 7.1L7.7 4.1" fill="none" stroke="#1f4a48" stroke-width="1.1" stroke-linecap="round" stroke-linejoin="round"/></svg><span class="nm n3"><span class="f" style="transform:scaleX(1.033);margin-right:2.2px;">23.52.181.212</span></span></div>
<div class="r"><span class="dt"><span class="f" style="transform:scaleX(0.988);margin-right:-0.8px;">Mar 23, 2026</span></span><svg class="ic" width="11" height="11" viewBox="0 0 11 11"><circle cx="5.5" cy="5.5" r="5.45" fill="#5fd988"/><path d="M3.3 5.7L4.8 7.1L7.7 4.1" fill="none" stroke="#1f4a48" stroke-width="1.1" stroke-linecap="round" stroke-linejoin="round"/></svg><span class="nm n3"><span class="f" style="transform:scaleX(1.033);margin-right:2.4px;">172.217.20.129</span></span></div>
<div class="r"><span class="dt"><span class="f" style="transform:scaleX(0.988);margin-right:-0.8px;">Mar 23, 2026</span></span><svg class="ic" width="11" height="11" viewBox="0 0 11 11"><circle cx="5.5" cy="5.5" r="5.45" fill="#5fd988"/><path d="M3.3 5.7L4.8 7.1L7.7 4.1" fill="none" stroke="#1f4a48" stroke-width="1.1" stroke-linecap="round" stroke-linejoin="round"/></svg><span class="nm n3"><span class="f" style="transform:scaleX(1.033);margin-right:2.0px;">23.216.77.30</span></span></div>
<div class="r"><span class="dt"><span class="f" style="transform:scaleX(0.988);margin-right:-0.8px;">Mar 23, 2026</span></span><svg class="ic" width="11" height="11" viewBox="0 0 11 11"><circle cx="5.5" cy="5.5" r="5.45" fill="#5fd988"/><path d="M3.3 5.7L4.8 7.1L7.7 4.1" fill="none" stroke="#1f4a48" stroke-width="1.1" stroke-linecap="round" stroke-linejoin="round"/></svg><span class="nm n3"><span class="f" style="transform:scaleX(1.033);margin-right:2.0px;">2.16.168.101</span></span></div>
</div><div class="sb" style="right:1.5px;top:32px;height:24.5px"></div></div>
<!-- page scrollbar -->
<div class="abs" style="left:1019px;top:112.5px;width:3px;height:154px;border-radius:2px;background:#3e5b70"></div>
</body>
</html>
